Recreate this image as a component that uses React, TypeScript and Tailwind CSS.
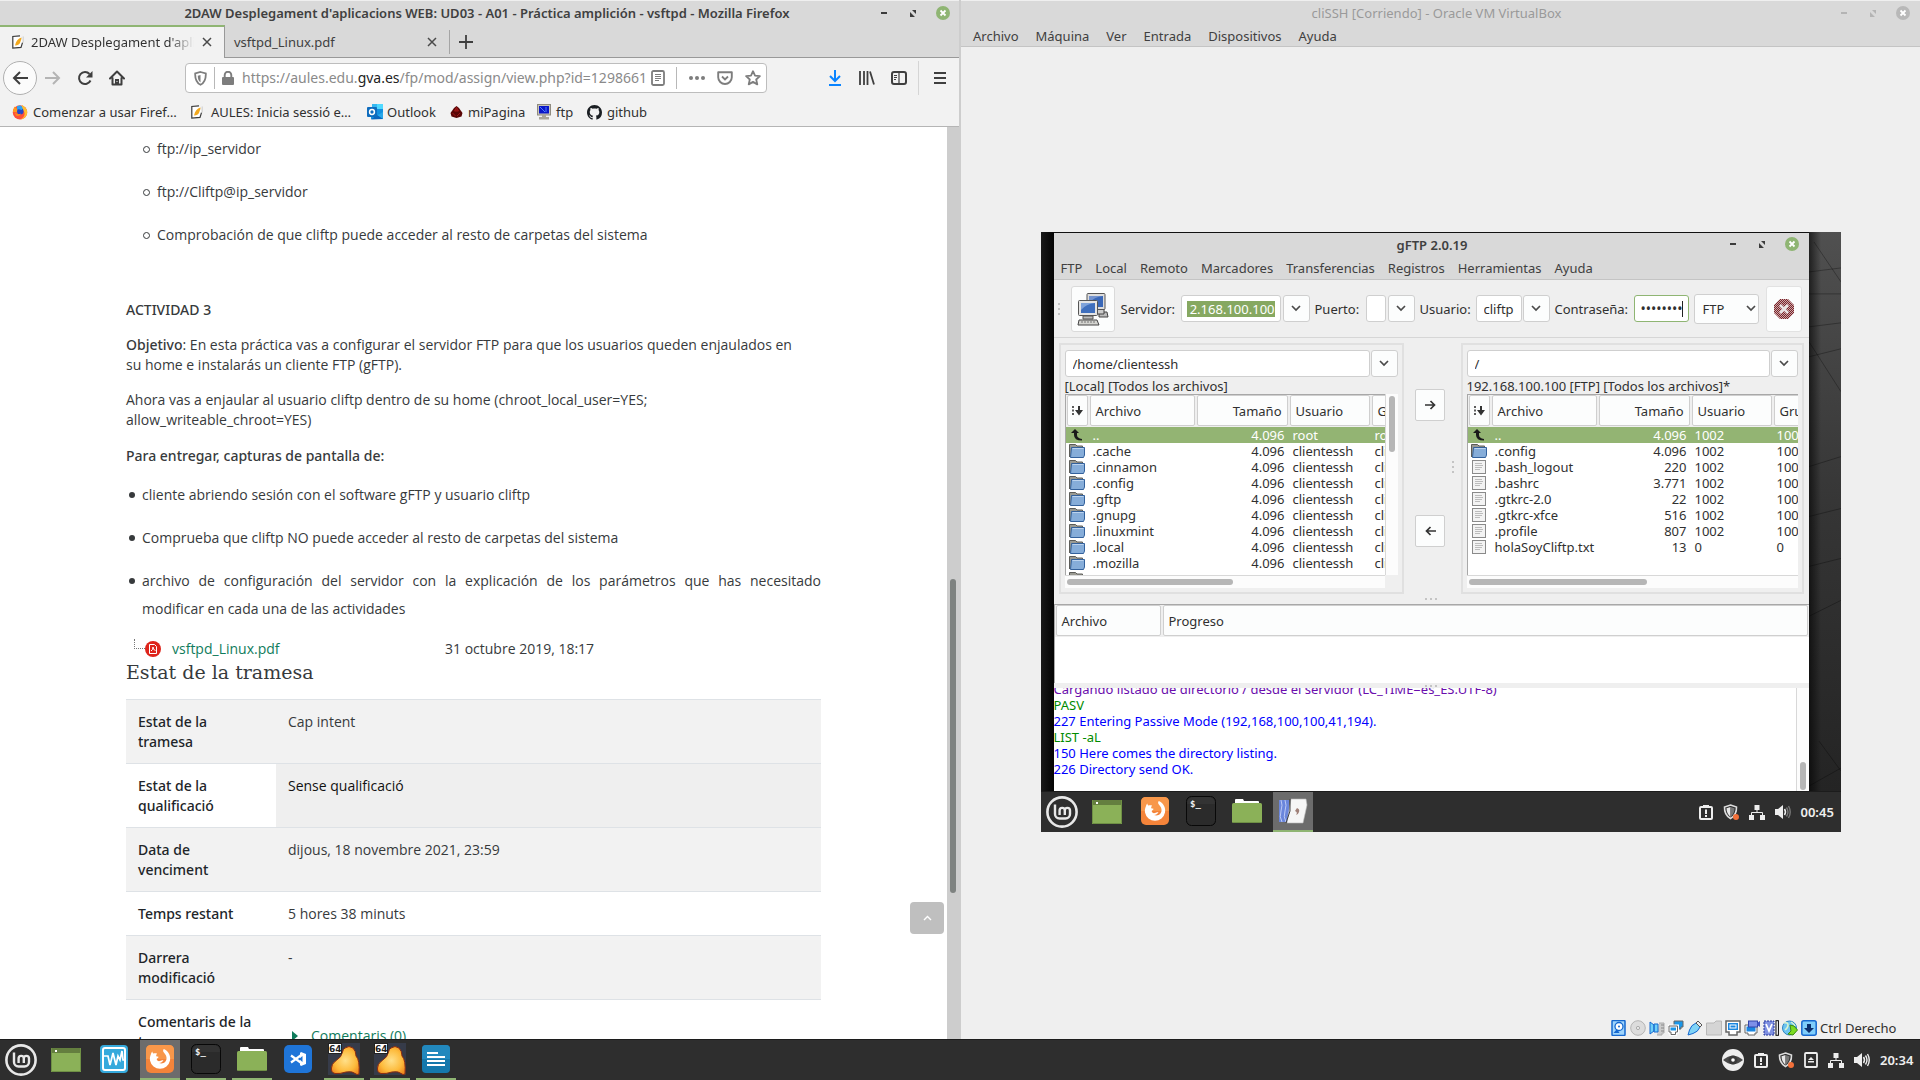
import React, { ReactNode } from "react";

/* ---------- window controls ---------- */

function WindowControls({ active = true }: { active?: boolean }) {
  const c = active ? "#3c3c3c" : "#b4b4b4";
  const close = active ? "#8fb573" : "#b8b8b8";
  return (
    <div className="flex items-center gap-[18px]">
      <button aria-label="Minimizar">
        <svg width="8" height="14" className="block"><rect x="1" y="6" width="6" height="2" fill={c} /></svg>
      </button>
      <button aria-label="Restaurar">
        <svg width="12" height="14" className="block">
          <path d="M6 4h4v4zM4 6v5h5z" fill={c} />
        </svg>
      </button>
      <button aria-label="Cerrar">
        <svg width="14" height="14" viewBox="0 0 14 14" className="block">
          <circle cx="7" cy="7" r="7" fill={close} />
          <path d="M4.500 4.500l5 5M9.500 4.500l-5 5" stroke="#fff" strokeWidth="1.800" />
        </svg>
      </button>
    </div>
  );
}

/* ---------- browser icons ---------- */

const CloseX = () => (
  <svg width="10" height="10" viewBox="0 0 10 10" className="block"><path d="M1 1l8 8M9 1l-8 8" stroke="#4a4a4a" strokeWidth="1.500" /></svg>
);

const AulesIcon = () => (
  <svg width="12" height="14" viewBox="0 0 12 14" className="block shrink-0">
    <path d="M8 .9L.8 1.500v11.700l8.200-.8 1.500-4.800" fill="#fff" stroke="#3a3a3a" strokeWidth="1.200" />
    <path d="M9.500 2.500C6 3.500 4 6 3 10.500c3-.1 5-1.500 5.500-4C9 5 9.500 4 9.500 2.500z" fill="#f2a81d" />
    <path d="M11.200 1.500v6" stroke="#ccc" />
  </svg>
);

const FirefoxColor = () => (
  <svg width="16" height="16" viewBox="0 0 16 16" className="block shrink-0">
    <circle cx="8" cy="8.400" r="7.200" fill="#ff4f3a" />
    <path d="M10 1c3 1.500 5.600 4.500 5.200 8-.4 3.500-3.400 6.500-7.200 6.500 3-1 5-3.500 4.500-6.500-.3-2-1.500-3-2.500-4z" fill="#ffbd2e" />
    <path d="M1 8C1 5 2 3.500 3 2.500l1 2 3-.5-1 2.500 2 2z" fill="#ff9a1f" />
    <circle cx="8.300" cy="7.300" r="3.200" fill="#2448c8" />
    <path d="M5 2.200c2-1.200 4-1 5 .5 1 1.400.5 3-.5 3.300-1.500-.8-2.500-1-4.500-.5z" fill="#2aa3f5" />
    <path d="M2.500 8.500c1.500 1 4 2.500 6.500 1-.5 2-3 3-5 2z" fill="#ff8a1e" />
  </svg>
);

const OutlookIcon = () => (
  <svg width="16" height="16" viewBox="0 0 16 16" className="block shrink-0">
    <path d="M5 0h11v5H5z" fill="#35b8f1" /><path d="M10 0h6v5h-6z" fill="#50d9ff" />
    <path d="M4 5h12v10H4z" fill="#1490df" /><path d="M16 8l-6 3.500 6 3.800z" fill="#28a8ea" />
    <path d="M4 15.500L16 15l-6-4z" fill="#0a66bd" />
    <rect y="3" width="10" height="10" rx="1" fill="#0f6cbd" />
    <circle cx="5" cy="8" r="2.400" fill="none" stroke="#fff" strokeWidth="1.500" />
  </svg>
);

const RubyIcon = () => (
  <svg width="13" height="12" viewBox="0 0 13 12" className="block shrink-0">
    <path d="M6.500 0l2.500 2 3.500 5-1 3.500L6.500 12l-5-1.500L.5 7 4 2z" fill="#5a0606" />
    <path d="M6.500 1.500L4.500 5h4zM2.500 7l3 3M10 7l-3 3" stroke="#a01818" fill="#8a0f0f" />
  </svg>
);

const FtpSiteIcon = () => (
  <svg width="14" height="16" viewBox="0 0 14 16" className="block shrink-0">
    <rect x=".5" y=".5" width="13" height="10.500" fill="#c8c4b8" stroke="#8f8b80" />
    <rect x="2" y="2" width="10" height="7.500" fill="#0a17c8" />
    <path d="M3 3l5 5M9 3v5" stroke="#4f7cff" />
    <path d="M5 11h4v2H5zM2 13h10v2.500H2z" fill="#a9a598" />
  </svg>
);

const GithubIcon = () => (
  <svg width="15" height="15" viewBox="0 0 16 16" className="block shrink-0">
    <path fill="#1b1f23" d="M8 0C3.580 0 0 3.580 0 8c0 3.540 2.290 6.530 5.470 7.590.4.070.55-.17.55-.38 0-.19-.01-.82-.01-1.490-2.010.37-2.530-.49-2.690-.94-.09-.23-.48-.94-.82-1.130-.28-.15-.68-.52-.01-.53.63-.01 1.080.58 1.230.82.72 1.210 1.870.87 2.330.66.07-.52.28-.87.51-1.070-1.780-.2-3.640-.89-3.640-3.950 0-.87.31-1.590.82-2.150-.08-.2-.36-1.020.08-2.120 0 0 .67-.21 2.200.82.64-.18 1.320-.27 2-.27s1.360.09 2 .27c1.530-1.040 2.200-.82 2.200-.82.44 1.100.16 1.920.08 2.120.51.56.82 1.270.82 2.150 0 3.070-1.870 3.750-3.650 3.950.29.25.54.73.54 1.480 0 1.070-.01 1.930-.01 2.200 0 .21.150.46.55.38A8.010 8.010 0 0016 8c0-4.420-3.580-8-8-8z" />
  </svg>
);

const BackIcon = () => (
  <svg width="16" height="14" viewBox="0 0 16 14"><path d="M8 1L2 7l6 6M2 7h14" fill="none" stroke="#3f3f3f" strokeWidth="2" /></svg>
);
const ForwardIcon = () => (
  <svg width="16" height="14" viewBox="0 0 16 14"><path d="M8 1l6 6-6 6M14 7H0" fill="none" stroke="#b4b4b4" strokeWidth="2" /></svg>
);
const ReloadIcon = () => (
  <svg width="16" height="16" viewBox="0 0 16 16">
    <path d="M13.500 10.500A6 6 0 1 1 12.500 4" fill="none" stroke="#3f3f3f" strokeWidth="2" />
    <path d="M15.500 1v6.500H9z" fill="#3f3f3f" />
  </svg>
);
const HomeIcon = () => (
  <svg width="16" height="16" viewBox="0 0 16 16">
    <path d="M1 8.500L8 1.500l7 7M3.500 8v6.500h9V8" fill="none" stroke="#3f3f3f" strokeWidth="2" strokeLinejoin="round" strokeLinecap="round" />
    <path d="M6 9h4v6H6z" fill="#3f3f3f" /><path d="M7.500 11h1v1h-1z" fill="#f2f2f2" />
  </svg>
);
const ShieldOutline = () => (
  <svg width="13" height="15" viewBox="0 0 13 15" className="block shrink-0"><path d="M6.500 1l5.300 1.500c.2 5-1 9-5.300 11.300C2.200 11.500 1 7.500 1.200 2.500z" fill="none" stroke="#7d7d7d" strokeWidth="1.800" /><path d="M6.500 4v7.500C4.300 9.800 3.800 7.500 3.800 4.800z" fill="#7d7d7d" /></svg>
);
const LockIcon = () => (
  <svg width="12" height="14" viewBox="0 0 12 14" className="block shrink-0"><rect y="6" width="12" height="8" rx="1" fill="#7d7d7d" /><path d="M2.700 7V4a3.300 3.300 0 0 1 6.600 0v3" fill="none" stroke="#7d7d7d" strokeWidth="1.900" /></svg>
);
const ReaderIcon = () => (
  <svg width="14" height="16" viewBox="0 0 14 16" className="block"><rect x="1" y="1" width="12" height="14" rx="1.500" fill="none" stroke="#7d7d7d" strokeWidth="1.800" /><path d="M4 4.500h6M4 6.500h6M4 8.500h6M4 10.500h4" stroke="#7d7d7d" /></svg>
);
const PocketIcon = () => (
  <svg width="16" height="15" viewBox="0 0 16 15" className="block"><path d="M1.200 1.200h13.600v5a6.800 6.800 0 0 1-13.600 0z" fill="none" stroke="#7d7d7d" strokeWidth="1.900" strokeLinejoin="round" /><path d="M5 5.500l3 3 3-3" fill="none" stroke="#7d7d7d" strokeWidth="1.800" /></svg>
);
const StarIcon = () => (
  <svg width="16" height="16" viewBox="0 0 16 16" className="block"><path d="M8 1.200l2 4.500 4.900.5-3.700 3.300 1.100 4.900L8 11.900l-4.300 2.500 1.100-4.900L1.100 6.200 6 5.700z" fill="none" stroke="#7d7d7d" strokeWidth="1.800" strokeLinejoin="round" /></svg>
);
const DownloadIcon = () => (
  <svg width="14" height="16" viewBox="0 0 14 16"><path d="M7 0v11M2 6l5 5 5-5" fill="none" stroke="#0a84ff" strokeWidth="2" /><path d="M1 14h12v2H1z" fill="#0a84ff" /></svg>
);
const LibraryIcon = () => (
  <svg width="16" height="14" viewBox="0 0 16 14"><path d="M1 0v14M5 0v14M8.500 0v14M11 .5l4 13" stroke="#3f3f3f" strokeWidth="1.800" /></svg>
);
const SidebarIcon = () => (
  <svg width="16" height="14" viewBox="0 0 16 14"><rect x="1" y="1" width="14" height="12" rx="2" fill="none" stroke="#3f3f3f" strokeWidth="2" /><path d="M8 1v12M3 4.500h3M3 6.500h3M3 8.500h2" stroke="#3f3f3f" strokeWidth="1.200" /></svg>
);
const MenuIcon = () => (
  <svg width="12" height="12" viewBox="0 0 12 12"><path d="M0 1h12M0 6h12M0 11h12" stroke="#3f3f3f" strokeWidth="2" /></svg>
);

/* ---------- panel (taskbar) icons ---------- */

const MintIcon = () => (
  <svg width="32" height="32" viewBox="0 0 32 32" className="block">
    <circle cx="16" cy="16" r="14.600" fill="none" stroke="#e8e8e8" strokeWidth="2.600" />
    <path d="M9 8.500v9.500a4.500 4.500 0 0 0 4.500 4.500h6a4.500 4.500 0 0 0 4.500-4.500v-3.500a2.600 2.600 0 0 0-5.200 0V19M18.800 14.500a2.600 2.600 0 0 0-5.200 0V19" fill="none" stroke="#e8e8e8" strokeWidth="2.400" />
  </svg>
);
const DesktopIcon = () => (
  <svg width="30" height="24" viewBox="0 0 30 24" className="block">
    <rect width="30" height="24" fill="#8bb158" /><rect width="30" height="5" fill="#647f3f" /><rect x="4" y="2" width="2" height="2" fill="#fff" />
    <path d="M.5 0v23.500h29V0" fill="none" stroke="#6f9045" />
  </svg>
);
const MonitorIcon = () => (
  <svg width="28" height="28" viewBox="0 0 28 28" className="block">
    <rect width="28" height="28" rx="4" fill="#35a9dc" />
    <rect x="3" y="3" width="22" height="22" rx="2" fill="none" stroke="#fff" strokeWidth="2" />
    <path d="M4 11h4l2 9 3-12 3 12 2-9 2 4 2-9 1 9h2" fill="none" stroke="#fff" strokeWidth="1.700" />
  </svg>
);
const FirefoxMint = () => (
  <svg width="28" height="28" viewBox="0 0 28 28" className="block">
    <rect width="28" height="28" rx="5" fill="#f4843a" /><path d="M0 14V5q0-5 5-5h18q5 0 5 5v9z" fill="#f8974a" />
    <path d="M5 9c.2-1 .8-2 1.500-2.500 0 1 .2 1.500.7 2C8.500 8 10 8 11 8.500c-.5 1-1 2-.8 2.800l2.300.5c.2 1-1.500 1.500-1.800 2.300 0 1.500 1.500 2.400 3.300 2 1.300-.3 2-1.100 3.500-.8-.8 1.500-2.500 2.600-4.500 2.700 4.500 1.500 8-1.500 7.500-5.500-.2-2.500-1.800-4-3-5.500-.6-1-.5-2 .3-3C22 6 25 10 24 15.500a10.200 10.200 0 0 1-20 0C3.600 13 4.200 11 5 9z" fill="#fff" />
  </svg>
);
const TerminalIcon = () => (
  <svg width="30" height="30" viewBox="0 0 30 30" className="block">
    <rect x=".5" y=".5" width="29" height="29" rx="5" fill="#2b2b2b" stroke="#080808" />
    <path d="M1 8q0-7 7-7h14q7 0 7 7" fill="#3c3c3c" opacity=".5" />
    <text x="4" y="11" fontSize="9" fontFamily="DejaVu Sans Mono, monospace" fontWeight="700" fill="#f0f0f0">$_</text>
  </svg>
);
const FolderGreen = () => (
  <svg width="30" height="26" viewBox="0 0 30 26" className="block">
    <path d="M3 7V2q0-1 1-1h7l1 2h14q1 0 1 1v3z" fill="#fff" />
    <rect y="5" width="30" height="20" rx="1.500" fill="#8bb158" /><path d="M1 24.500h28" stroke="#6f9045" />
  </svg>
);
const CodeIcon = () => (
  <svg width="28" height="28" viewBox="0 0 28 28" className="block">
    <rect width="28" height="28" rx="5" fill="#1f75d8" />
    <path d="M7 10.500L18 18.500M7 17.500L18 9.500" stroke="#fff" strokeWidth="2.200" /><path d="M17 7l5 2v10l-5 2-1-1V8z" fill="#fff" /><path d="M18.500 11v6L15 14z" fill="#1f75d8" />
  </svg>
);
const Vm64Icon = () => (
  <svg width="32" height="32" viewBox="0 0 32 32" className="block">
    <defs><radialGradient id="vmg" cx=".5" cy=".5" r=".6"><stop offset="0" stopColor="#ffe08a" /><stop offset=".65" stopColor="#fdbb3c" /><stop offset="1" stopColor="#f08c20" /></radialGradient></defs>
    <rect width="32" height="32" fill="#363b49" />
    <path d="M17 5q4-3 8 0 3 3 3 8 4 4 3 18l-2 .5q-5-4-11-2.500-6 2-11 1.500-4-1-3.500-5.500 0-4 4-7Q14 14 14.500 9q.5-3 2.500-4z" fill="url(#vmg)" stroke="#8c2c10" />
    <rect width="14" height="11" fill="#222" /><rect x="1" y="1" width="12" height="9" fill="#fff" />
    <text x="1" y="9" fontSize="9" fontFamily="DejaVu Sans, sans-serif" fontWeight="700" fill="#222">64</text>
  </svg>
);
const WriterIcon = () => (
  <svg width="28" height="28" viewBox="0 0 28 28" className="block">
    <rect width="28" height="28" rx="4" fill="#1578ac" /><path d="M0 14V4q0-4 4-4h20q4 0 4 4v10z" fill="#2288bd" />
    <path d="M5 8h11M5 12h18M5 16h18M5 20h18" stroke="#fff" strokeWidth="2" />
  </svg>
);
const GftpTaskIcon = () => (
  <svg width="30" height="28" viewBox="0 0 30 28" className="block">
    <rect x="1" y="3" width="10" height="22" fill="#6a86dc" /><path d="M3 3q2 5 0 11t1 11M7 3q2 5 0 11t1 11" stroke="#bccaf5" fill="none" />
    <path d="M13 2h15l1 6-4 18H9z" fill="#f6f6f6" stroke="#bbb" strokeWidth=".6" /><path d="M12 2v12L8 26" stroke="#444" fill="none" />
    <path d="M19 11q3 1 2 4t-3 3q2-3-1-4z" fill="#a08078" />
  </svg>
);

/* ---------- tray icons ---------- */

const EyeTray = () => (
  <svg width="22" height="22" viewBox="0 0 22 22" className="block"><circle cx="11" cy="11" r="11" fill="#eee" /><path d="M1 11Q11 2.500 21 11 11 19.500 1 11z" fill="#4a4a4a" /><circle cx="11" cy="11" r="4.500" fill="#3a3a3a" /><circle cx="11" cy="11" r="1.800" fill="#fff" /></svg>
);
const ClipTray = () => (
  <svg width="14" height="16" viewBox="0 0 14 16" className="block"><rect x="1" y="3" width="12" height="12" rx="1" fill="none" stroke="#eee" strokeWidth="2" /><rect x="4" y="1" width="6" height="3" fill="#eee" /><path d="M7 5.500v4.500M7 11v2" stroke="#eee" strokeWidth="2" /></svg>
);
const ShieldTray = () => (
  <svg width="16" height="16" viewBox="0 0 16 16" className="block"><path d="M7.500 1l6 2c.2 5-1.500 9-6 11.500C3 12 1.300 8 1.500 3z" fill="none" stroke="#ddd" strokeWidth="1.600" /><path d="M7.500 3v10C5 11 3.500 8 3.500 4.300z" fill="#e8e8e8" /><path d="M7.500 3v10c2.500-2 4-5 4-8.700z" fill="#777" /><circle cx="13" cy="13" r="3" fill="#f2703a" /></svg>
);
const EjectTray = () => (
  <svg width="14" height="16" viewBox="0 0 14 16" className="block"><rect x="1" y="1" width="12" height="14" rx="1" fill="none" stroke="#eee" strokeWidth="1.800" /><path d="M7 5l3 3H4zM4 9h6v1.500H4z" fill="#eee" /></svg>
);
const NetTray = () => (
  <svg width="16" height="16" viewBox="0 0 16 16" className="block"><path d="M5.500 1h5v5h-5zM0 11h5v5H0zM11 11h5v5h-5z" fill="#eee" /><path d="M8 5v3.500M2.500 11V8.500h11V11" fill="none" stroke="#eee" /></svg>
);
const VolumeTray = ({ faded = false }: { faded?: boolean }) => (
  <svg width="16" height="14" viewBox="0 0 16 14" className="block"><path d="M0 4h3l5-4v14l-5-4H0z" fill="#eee" /><path d="M9.500 4q2 3 0 6" fill="none" stroke="#eee" strokeWidth="1.500" /><path d="M11.500 2.500q3 4.500 0 9M13.500 1q3.500 6 0 12" fill="none" stroke={faded ? "#777" : "#eee"} strokeWidth="1.400" /></svg>
);

/* ---------- panel ---------- */

type Task = { label: string; icon: ReactNode; active?: boolean; running?: boolean };

function Panel({ tasks, tray, clock }: { tasks: Task[]; tray: ReactNode; clock: string }) {
  return (
    <div className="flex h-[41px] shrink-0 items-stretch border-t border-[#1c1c1c] bg-[#2e2e2e]">
      <button aria-label="Menú" className="flex w-[42px] items-center justify-center"><MintIcon /></button>
      <button aria-label="Mostrar escritorio" className="flex w-[48px] items-center justify-center"><DesktopIcon /></button>
      <div className="flex gap-[6px] pl-1">
        {tasks.map((t, i) => (
          <button key={i} aria-label={t.label}
            className={`flex w-10 items-center justify-center border-b-2 ${t.running ? "border-[#8fb573]" : "border-transparent"} ${t.active ? "bg-[#6c6c6c]" : ""}`}>
            {t.icon}
          </button>
        ))}
      </div>
      <div className="ml-auto flex items-center gap-[10px] pr-1">
        {tray}
        <span className="w-[36px] whitespace-nowrap text-[13px] font-semibold leading-4 text-[#eee]">{clock}</span>
      </div>
    </div>
  );
}

/* ---------- Firefox window ---------- */

const bookmarks = [
  { label: "Comenzar a usar Firef…", icon: <FirefoxColor />, w: "w-[179px] gap-[5px]" },
  { label: "AULES: Inicia sessió e…", icon: <AulesIcon />, w: "w-[176px] gap-[8px]" },
  { label: "Outlook", icon: <OutlookIcon />, w: "w-[83px] gap-[4px]" },
  { label: "miPagina", icon: <RubyIcon />, w: "w-[87px] gap-[5px]" },
  { label: "ftp", icon: <FtpSiteIcon />, w: "w-[50px] gap-[5px]" },
  { label: "github", icon: <GithubIcon />, w: "w-[70px] gap-[5px]" },
];

function Bullet({ hollow, children }: { hollow?: boolean; children: ReactNode }) {
  return (
    <li className={`flex leading-7 ${hollow ? "ml-[17px]" : "ml-[3px]"}`}>
      <span className={`mr-[7px] mt-[11px] shrink-0 rounded-full ${hollow ? "size-[7px] border border-[#373a3c]" : "size-[6px] bg-[#373a3c]"}`} />
      <span className="flex-1">{children}</span>
    </li>
  );
}

const status: { h: ReactNode; v: ReactNode; row: string; cell?: string }[] = [
  { h: "Estat de la tramesa", v: "Cap intent", row: "bg-[#f2f2f2]" },
  { h: "Estat de la qualificació", v: "Sense qualificació", row: "", cell: "bg-[#efefef] text-[#111]" },
  { h: "Data de venciment", v: "dijous, 18 novembre 2021, 23:59", row: "bg-[#f2f2f2]" },
  { h: "Temps restant", v: "5 hores 38 minuts", row: "" },
  { h: "Darrera modificació", v: "-", row: "bg-[#f2f2f2]" },
  {
    h: "Comentaris de la tramesa",
    v: (
      <a href="#comentaris" className="mt-[14px] flex items-center text-[#0f7c5c]">
        <svg width="7" height="10" className="mr-[12px] ml-[4px] block"><path d="M0 0l6 5-6 5z" fill="#0f7c5c" /></svg>
        Comentaris (0)
      </a>
    ),
    row: "",
  },
];

const medium = "font-['Noto_Sans',sans-serif] font-medium";

function Firefox() {
  return (
    <section className="flex min-w-0 flex-1 flex-col border-t border-t-[#efefef] bg-[#f2f2f2]">
      <header className="flex h-6 shrink-0 items-center bg-[#d9d9d9] pr-[9px]">
        <span className="flex-1 truncate pl-[94px] text-center font-semibold text-[#404040]">
          2DAW Desplegament d'aplicacions WEB: UD03 - A01 - Práctica amplición - vsftpd - Mozilla Firefox
        </span>
        <WindowControls />
      </header>

      <div className="flex h-[33px] shrink-0 bg-[#d9d9d9]">
        <div className="flex w-[225px] shrink-0 items-center border-t-2 border-r border-t-[#8fb573] border-r-[#999] bg-[#f2f2f2] pr-3 pb-px pl-3">
          <AulesIcon />
          <span className="ml-[7px] flex-1 overflow-hidden whitespace-nowrap bg-linear-to-r from-[#303030] from-85% to-transparent bg-clip-text text-transparent">2DAW Desplegament d'aplicacions</span>
          <button aria-label="Cerrar pestaña" className="ml-2"><CloseX /></button>
        </div>
        <div className="flex flex-1 items-center border-t border-b border-t-[#d9d9d9] border-b-[#999]">
          <div className="flex h-6 w-[225px] items-center border-r border-[#a5a5a5] pr-[12px] pl-[9px] text-[#404040]">
            <span className="flex-1">vsftpd_Linux.pdf</span>
            <button aria-label="Cerrar pestaña"><CloseX /></button>
          </div>
          <button aria-label="Nueva pestaña" className="ml-[9px]">
            <svg width="14" height="14" className="block"><path d="M7 0v14M0 7h14" stroke="#3f3f3f" strokeWidth="1.800" /></svg>
          </button>
        </div>
      </div>

      <div className="flex h-[40px] shrink-0 items-center pr-[13px] pl-[3px]">
        <button aria-label="Atrás" className="mr-2 flex size-[34px] items-center justify-center rounded-full border border-[#b0b0b0] bg-[#fbfbfb]"><BackIcon /></button>
        <button aria-label="Adelante" className="flex w-4 justify-center"><ForwardIcon /></button>
        <button aria-label="Recargar" className="ml-4 flex w-4 justify-center"><ReloadIcon /></button>
        <button aria-label="Inicio" className="ml-4 flex w-4 justify-center"><HomeIcon /></button>
        <div className="ml-[60px] flex h-[30px] min-w-0 flex-1 items-center rounded-[4px] border border-[#bdbdbd] bg-white pr-[5px] pl-2">
          <ShieldOutline />
          <span className="mx-[7px] h-[22px] w-px bg-[#b8b8b8]" />
          <LockIcon />
          <div role="textbox" aria-label="Dirección" className="ml-2 flex-1 overflow-hidden whitespace-nowrap text-[14px] text-[#8a8a8a]">
            https://aules.edu.<span className="text-[#222]">gva.es</span>/fp/mod/assign/view.php?id=1298661
          </div>
          <button aria-label="Vista de lectura"><ReaderIcon /></button>
          <span className="mr-3 ml-[11px] h-[22px] w-px bg-[#b8b8b8]" />
          <button aria-label="Acciones de página"><svg width="16" height="4" className="block"><circle cx="2" cy="2" r="2" fill="#7d7d7d" /><circle cx="8" cy="2" r="2" fill="#7d7d7d" /><circle cx="14" cy="2" r="2" fill="#7d7d7d" /></svg></button>
          <button aria-label="Guardar en Pocket" className="mx-3"><PocketIcon /></button>
          <button aria-label="Añadir a marcadores"><StarIcon /></button>
        </div>
        <div className="ml-[60px] flex items-center gap-4">
          <button aria-label="Descargas" className="flex w-4 justify-center"><DownloadIcon /></button>
          <button aria-label="Biblioteca"><LibraryIcon /></button>
          <button aria-label="Barra lateral"><SidebarIcon /></button>
        </div>
        <span className="mr-[15px] ml-[11px] h-[34px] w-px bg-[#d5d5d5]" />
        <button aria-label="Abrir menú"><MenuIcon /></button>
      </div>

      <nav className="flex h-[29px] shrink-0 items-center border-b border-[#b5b5b5] pl-[12px] text-[#303030]">
        {bookmarks.map((b) => (
          <a key={b.label} href="#marcador" className={`flex shrink-0 items-center whitespace-nowrap ${b.w}`}>
            {b.icon}{b.label}
          </a>
        ))}
      </nav>

      <div className="flex min-h-0 flex-1 bg-white">
        <div className="relative min-w-0 flex-1 overflow-hidden pt-2 pr-[126px] pl-[126px] font-['Open_Sans',sans-serif] text-[14px] leading-5 text-[#373a3c]">
          <ul className="flex flex-col gap-[15px]">
            <Bullet hollow>ftp://ip_servidor</Bullet>
            <Bullet hollow>ftp://Cliftp@ip_servidor</Bullet>
            <Bullet hollow>Comprobación de que cliftp puede acceder al resto de carpetas del sistema</Bullet>
          </ul>
          <p className={`mt-[51px] ${medium}`}>ACTIVIDAD 3</p>
          <p className="mt-[15px]">
            <b className={medium}>Objetivo</b>: En esta práctica vas a configurar el servidor FTP para que los usuarios queden enjaulados en
            <br />su home e instalarás un cliente FTP (gFTP).
          </p>
          <p className="mt-[15px]">Ahora vas a enjaular al usuario cliftp dentro de su home (chroot_local_user=YES;<br />allow_writeable_chroot=YES)</p>
          <p className={`mt-4 ${medium}`}>Para entregar, capturas de pantalla de:</p>
          <ul className="mt-[15px] flex flex-col gap-[15px]">
            <Bullet>cliente abriendo sesión con el software gFTP y usuario cliftp</Bullet>
            <Bullet>Comprueba que cliftp NO puede acceder al resto de carpetas del sistema</Bullet>
            <Bullet>
              <span className="block text-justify [text-align-last:justify]">archivo de configuración del servidor con la explicación de los parámetros que has necesitado</span>
              modificar en cada una de las actividades
            </Bullet>
          </ul>
          <div className="mt-4 flex h-5 items-center pl-[8px]">
            <span className="h-[10px] w-[11px] self-start border-b border-l border-dotted border-[#777]" />
            <svg width="16" height="16" viewBox="0 0 16 16" className="mr-[11px] block"><circle cx="8" cy="8" r="8" fill="#de241b" /><path d="M4.500 3.500h5l2 2v7h-7zM6 10q2-1 2-4 0 3 2.500 3.500" fill="none" stroke="#fff" strokeWidth="1" /></svg>
            <a href="#vsftpd" className="w-[273px] text-[#0f7c5c]">vsftpd_Linux.pdf</a>
            <span>31 octubre 2019, 18:17</span>
          </div>
          <h3 className="font-['DejaVu_Serif',serif] text-[19px] leading-[27px]">Estat de la tramesa</h3>
          <table className="mt-[13px] w-full table-fixed border-collapse">
            <colgroup><col className="w-[150px]" /><col /></colgroup>
            <tbody>
              {status.map((s, i) => (
                <tr key={i} className={`border-t border-[#dee2e6] align-top ${s.row}`}>
                  <th scope="row" className={`py-3 pr-[22px] pb-[11px] pl-[12px] text-left text-[#212529] ${medium}`}>{s.h}</th>
                  <td className={`px-[12px] pt-3 pb-[11px] ${s.cell ?? ""}`}>{s.v}</td>
                </tr>
              ))}
            </tbody>
          </table>
          <button aria-label="Subir" className="absolute right-[3px] bottom-[105px] flex h-8 w-[34px] items-center justify-center rounded-[4px] bg-[#bfbfbf]">
            <svg width="9" height="6" className="block"><path d="M1 5l3.500-3.500L8 5" fill="none" stroke="#fff" strokeWidth="1.400" /></svg>
          </button>
        </div>
        <div className="flex w-[12px] shrink-0 flex-col items-center bg-[#cdcdcd]">
          <span className="basis-[452px]" />
          <span className="h-[314px] w-[6px] rounded-full bg-[#7e8280]" />
        </div>
      </div>
    </section>
  );
}

/* ---------- gFTP ---------- */

const ConnectIcon = () => (
  <svg width="32" height="34" viewBox="0 0 32 34" className="block">
    <path d="M22 20h8l1 5h-9z" fill="#bbb" stroke="#444" /><path d="M19 17h8v5h-8z" fill="#ccc" stroke="#444" />
    <rect x="10" y="1.500" width="18" height="16" rx="1" fill="#ddd" stroke="#555" /><rect x="12" y="4" width="14" height="11" fill="#3a68b8" /><path d="M12 11V4h14q-9 1-14 7z" fill="#7393cf" />
    <rect x="1.500" y="8.500" width="19" height="15" rx="1" fill="#e4e4e4" stroke="#555" /><rect x="4" y="11" width="14" height="10" fill="#3f6fbd" /><path d="M4 18V11h14q-9 1-14 7z" fill="#7ea2da" />
    <path d="M6 24h10v3H6z" fill="#bbb" stroke="#555" /><path d="M2 28h18l2 5H1z" fill="#d4d4d0" stroke="#444" /><path d="M4 30h14" stroke="#777" strokeDasharray="2 1" />
  </svg>
);

const StopIcon = () => (
  <svg width="22" height="22" viewBox="0 0 22 22" className="block">
    <defs><pattern id="chk" width="2" height="2" patternUnits="userSpaceOnUse"><rect width="2" height="2" fill="#c9a9a9" /><path d="M0 0h1v1H0zM1 1h1v1H1z" fill="#7c2229" /></pattern></defs>
    <path d="M7 1h8l6 6v8l-6 6H7l-6-6V7z" fill="url(#chk)" /><path d="M7 7l8 8M15 7l-8 8" stroke="#e9e4e4" strokeWidth="2.500" />
  </svg>
);

const Chevron = () => (
  <svg width="10" height="7" viewBox="0 0 10 7" className="block"><path d="M1 1l4 4 4-4" fill="none" stroke="#4a4a4a" strokeWidth="1.700" /></svg>
);

const FolderBlue = () => (
  <svg width="16" height="14" viewBox="0 0 16 14" className="block">
    <path d="M.5 13V.5h6l1.500 1.500h5.500V4" fill="#9a9a92" stroke="#5c5c58" /><path d="M2.500 3.500h13V11l-1 2.500h-13z" fill="#86add9" stroke="#33619c" /><path d="M3.500 4.500h11" stroke="#bcd3ee" />
  </svg>
);
const FileIcon = () => (
  <svg width="14" height="14" viewBox="0 0 14 14" className="block">
    <rect x=".5" y=".5" width="13" height="13" fill="#f3f3f3" stroke="#8a8a8a" /><path d="M3 3.500h7M3 5.500h8M3 7.500h7M3 9.500h5" stroke="#bcbcbc" />
  </svg>
);
const UpIcon = () => (
  <svg width="12" height="12" viewBox="0 0 12 12" className="block"><path d="M4 0l4 4H6v2q0 3 5 4v1.500Q3 11.500 3 6V4H0z" fill="#1a1a1a" /></svg>
);
const SortIcon = () => (
  <svg width="11" height="10" viewBox="0 0 11 10" className="block"><path d="M1 0v10" stroke="#333" strokeWidth="1.600" strokeDasharray="2 1.500" /><path d="M6 0h2v4h3L7 9.500 3 4h3z" fill="#333" /></svg>
);

type Row = { icon: ReactNode; name: string; size: string; user: string; group: string };

const local: Row[] = [
  { icon: <UpIcon />, name: "..", size: "4.096", user: "root", group: "root" },
  ...[".cache", ".cinnamon", ".config", ".gftp", ".gnupg", ".linuxmint", ".local", ".mozilla"].map((name) => ({
    icon: <FolderBlue />, name, size: "4.096", user: "clientessh", group: "clientessh",
  })),
  { icon: <FolderBlue />, name: "", size: "", user: "", group: "" },
];
const remote: Row[] = [
  { icon: <UpIcon />, name: "..", size: "4.096", user: "1002", group: "1002" },
  { icon: <FolderBlue />, name: ".config", size: "4.096", user: "1002", group: "1002" },
  { icon: <FileIcon />, name: ".bash_logout", size: "220", user: "1002", group: "1002" },
  { icon: <FileIcon />, name: ".bashrc", size: "3.771", user: "1002", group: "1002" },
  { icon: <FileIcon />, name: ".gtkrc-2.0", size: "22", user: "1002", group: "1002" },
  { icon: <FileIcon />, name: ".gtkrc-xfce", size: "516", user: "1002", group: "1002" },
  { icon: <FileIcon />, name: ".profile", size: "807", user: "1002", group: "1002" },
  { icon: <FileIcon />, name: "holaSoyCliftp.txt", size: "13", user: "0", group: "0" },
];

function HeadCell({ children, right }: { children: ReactNode; right?: boolean }) {
  return (
    <th className="h-8 bg-[#efefef] p-0 px-px align-top font-normal">
      <div className={`flex h-[31px] items-center overflow-hidden rounded-[2px] border border-[#cfcfcf] bg-[#fcfdfd] px-[5px] ${right ? "justify-end" : ""}`}>{children}</div>
    </th>
  );
}

function FilePane({ path, label, id, rows, scroll, className }: { path: string; label: string; id: string; rows: Row[]; scroll?: boolean; className: string }) {
  return (
    <div className={`flex min-w-0 flex-col border-2 border-[#e0e0e0] px-1 pt-[5px] pb-1 ${className}`}>
      <div className="flex gap-px">
        <input id={id} aria-label={label} defaultValue={path} className="h-[27px] min-w-0 flex-1 rounded-[3px] border border-[#cfcfcf] bg-white px-[7px]" />
        <DropButton label={"Historial " + id} />
      </div>
      <div className="h-[17px] whitespace-nowrap leading-[18px]">{label}</div>
      <div className="flex">
        <div className="h-[181px] min-w-0 flex-1 overflow-hidden border-t border-l border-[#a8a8a8] bg-white">
          <table className="w-[420px] table-fixed border-collapse">
            <colgroup>
              <col className="w-[23px]" /><col className="w-[107px]" /><col className="w-[93px]" /><col className="w-[82px]" /><col />
            </colgroup>
            <thead>
              <tr>
                <HeadCell><span className="-mx-px"><SortIcon /></span></HeadCell>
                <HeadCell>Archivo</HeadCell>
                <HeadCell right>Tamaño</HeadCell>
                <HeadCell>Usuario</HeadCell>
                <HeadCell>Grupo</HeadCell>
              </tr>
            </thead>
            <tbody>
              {rows.map((r, i) => (
                <tr key={i} className={`h-4 leading-4 ${i === 0 ? "bg-[#93b473] text-white" : ""}`}>
                  <td className="p-0"><span className="flex h-4 items-center justify-center">{r.icon}</span></td>
                  <td className="overflow-hidden whitespace-nowrap py-0 pr-0 pl-1">{r.name}</td>
                  <td className="py-0 pr-1 pl-0 text-right">{r.size}</td>
                  <td className="py-0 pr-0 pl-1">{r.user}</td>
                  <td className="py-0 pr-0 pl-1">{r.group}</td>
                </tr>
              ))}
            </tbody>
          </table>
        </div>
        {scroll && (
          <div className="flex w-[13px] justify-center border-l border-[#d8d8d8] bg-[#fcfcfc] pt-[2px]">
            <span className="h-[56px] w-[6px] rounded-full bg-[#b6b6b6]" />
          </div>
        )}
      </div>
      <div className={`flex h-[13px] items-center border-t border-[#d8d8d8] bg-[#fcfcfc] pl-[2px] ${scroll ? "mr-[13px]" : ""}`}>
        <span className={`h-[6px] rounded-full bg-[#b6b6b6] ${scroll ? "w-[166px]" : "w-[178px]"}`} />
      </div>
    </div>
  );
}

function DropButton({ label }: { label: string }) {
  return (
    <button aria-label={label} className="flex h-[27px] w-[27px] shrink-0 items-center justify-center rounded-[3px] border border-[#cfcfcf] bg-[#fcfdfd]"><Chevron /></button>
  );
}

const Grip = ({ vertical }: { vertical?: boolean }) => (
  <span className={`flex gap-[3px] ${vertical ? "flex-col" : ""}`}>
    <i className="size-[2px] bg-[#c4c4c4]" /><i className="size-[2px] bg-[#c4c4c4]" /><i className="size-[2px] bg-[#c4c4c4]" />
  </span>
);

const log = [
  { t: "Cargando listado de directorio / desde el servidor (LC_TIME=es_ES.UTF-8)", c: "text-[#6a0dad]" },
  { t: "PASV", c: "text-[#008b00]" },
  { t: "227 Entering Passive Mode (192,168,100,100,41,194).", c: "text-[#0000ff]" },
  { t: "LIST -aL", c: "text-[#008b00]" },
  { t: "150 Here comes the directory listing.", c: "text-[#0000ff]" },
  { t: "226 Directory send OK.", c: "text-[#0000ff]" },
];

function Gftp() {
  return (
    <div className="mt-px flex min-w-0 flex-1 flex-col bg-[#efefef]">
      <header className="flex h-[22px] items-center bg-[#d9d9d9] pr-[10px]">
        <span className="flex-1 pt-[2px] pl-[82px] text-center font-semibold text-[#404040]">gFTP 2.0.19</span>
        <WindowControls />
      </header>
      <nav className="flex h-[25px] items-center gap-[13px] border-b border-[#c4c4c4] bg-[#d9d9d9] pt-[2px] pl-[7px] text-[#404040]">
        {["FTP", "Local", "Remoto", "Marcadores", "Transferencias", "Registros", "Herramientas", "Ayuda"].map((m) => <button key={m}>{m}</button>)}
      </nav>

      <div className="flex h-[58px] items-center border-b border-[#d6d6d6] pr-[7px] pl-1">
        <Grip vertical />
        <button aria-label="Conectar" className="ml-[11px] flex h-[46px] w-[44px] items-center justify-center rounded-[3px] border border-[#dadada] bg-[#fcfdfd]"><ConnectIcon /></button>
        <label htmlFor="srv" className="w-[66px] pl-[6px]">Servidor:</label>
        <div className="mr-[2px] flex h-[27px] w-[100px] items-center rounded-[3px] border border-[#cfcfcf] bg-white px-[5px]">
          <input id="srv" defaultValue="2.168.100.100" className="h-4 w-full bg-[#86a861] text-right text-white" />
        </div>
        <DropButton label="Historial de servidores" />
        <label htmlFor="port" className="w-[56px] pl-[5px]">Puerto:</label>
        <input id="port" className="mr-[2px] h-[27px] w-5 rounded-[3px] border border-[#cfcfcf] bg-white" />
        <DropButton label="Historial de puertos" />
        <label htmlFor="usr" className="w-[61px] pl-[5px]">Usuario:</label>
        <input id="usr" defaultValue="cliftp" className="mr-px h-[27px] w-[46px] rounded-[3px] border border-[#cfcfcf] bg-white px-[7px]" />
        <DropButton label="Historial de usuarios" />
        <label htmlFor="pwd" className="w-[84px] pl-[5px]">Contraseña:</label>
        <div className="flex h-[27px] w-[55px] items-center rounded-[3px] border border-[#8fb573] bg-white pl-[6px]">
          <input id="pwd" type="password" defaultValue="usuario1" className="w-[41px] min-w-0 text-[14px]" />
          <span className="h-4 w-px bg-[#222]" />
        </div>
        <div className="relative ml-[5px] w-[65px] shrink-0">
          <select aria-label="Protocolo" className="h-[30px] w-full appearance-none rounded-[3px] border border-[#cfcfcf] bg-[#fcfdfd] pl-2"><option>FTP</option></select>
          <span className="pointer-events-none absolute top-[11px] right-[3px]"><Chevron /></span>
        </div>
        <button aria-label="Detener" className="ml-[7px] flex h-[46px] w-9 shrink-0 items-center justify-center rounded-[3px] border border-[#e2e2e2] bg-[#fcfdfd]"><StopIcon /></button>
      </div>

      <div className="flex px-[5px] pt-[5px]">
        <FilePane id="local" path="/home/clientessh" label="[Local] [Todos los archivos]" rows={local} scroll className="w-[345px] shrink-0" />
        <div className="flex w-[57px] shrink-0 flex-col items-center pt-[46px]">
          <button aria-label="Subir archivos" className="mr-[4px] flex h-8 w-[30px] items-center justify-center rounded-[2px] border border-[#cfcfcf] bg-[#fcfdfd]">
            <svg width="11" height="10" viewBox="0 0 11 10"><path d="M0 5h9M5.500 1l4 4-4 4" fill="none" stroke="#333" strokeWidth="1.700" /></svg>
          </button>
          <div className="mt-[40px] mr-[7px] flex h-[14px] self-end"><Grip vertical /></div>
          <button aria-label="Descargar archivos" className="mt-[40px] mr-[4px] flex h-8 w-[30px] items-center justify-center rounded-[2px] border border-[#cfcfcf] bg-[#fcfdfd]">
            <svg width="11" height="10" viewBox="0 0 11 10"><path d="M11 5H2M5.500 1l-4 4 4 4" fill="none" stroke="#333" strokeWidth="1.700" /></svg>
          </button>
        </div>
        <FilePane id="remoto" path="/" label="192.168.100.100 [FTP] [Todos los archivos]*" rows={remote} className="flex-1" />
      </div>
      <div className="flex h-[10px] items-center justify-center"><Grip /></div>

      <div className="h-[79px] border-t border-l border-[#a8a8a8] bg-white">
        <table className="w-full table-fixed border-collapse">
          <colgroup><col className="w-[107px]" /><col /></colgroup>
          <thead><tr><HeadCell>Archivo</HeadCell><HeadCell>Progreso</HeadCell></tr></thead>
        </table>
      </div>
      <div className="flex h-[5px] items-center justify-center"><Grip /></div>

      <div className="flex h-[103px] bg-white">
        <div className="flex flex-1 flex-col justify-end overflow-hidden pb-[14px]">
          {log.map((l) => <p key={l.t} className={`shrink-0 leading-4 ${l.c}`}>{l.t}</p>)}
        </div>
        <div className="flex w-[13px] items-end justify-center border-l border-[#d8d8d8] bg-[#fcfcfc] pb-px">
          <span className="h-7 w-[6px] rounded-full bg-[#b6b6b6]" />
        </div>
      </div>
    </div>
  );
}

/* ---------- VirtualBox window ---------- */

const box = "size-4 block shrink-0";
const StatusIcons = () => (
  <>
    <svg viewBox="0 0 16 16" className={box}><rect x="1" y=".5" width="13" height="15" rx="1" fill="#9fd4fb" stroke="#1668cf" strokeWidth="1.500" /><circle cx="8" cy="6.500" r="4" fill="#fff" stroke="#1668cf" strokeWidth="1.300" /><circle cx="8" cy="6.500" r="1" fill="#1668cf" /><path d="M6 9l-3.500 4h6z" fill="#1668cf" /></svg>
    <svg viewBox="0 0 16 16" className={box}><circle cx="8" cy="8" r="7.300" fill="#dcdcdc" stroke="#b4b4b4" /><circle cx="8" cy="8" r="1.600" fill="#eee" stroke="#aaa" /></svg>
    <svg viewBox="0 0 16 16" className={box}><path d="M10 3h5v10h-2v2H8" fill="#ccc" stroke="#aaa" /><path d="M1 2l4 3v6l-4 3zM5 4h4v8H5z" fill="#6fd0f8" stroke="#1668cf" /><path d="M12 5h3M12 8h3M12 11h3" stroke="#888" /></svg>
    <svg viewBox="0 0 16 16" className={box}><path d="M6 1h9v6h-2v2H8V7H6z" fill="#1a96e8" stroke="#666" /><path d="M1 6h8.500v6h-2v2.500H3V12H1z" fill="#1a96e8" stroke="#fff" strokeWidth="3" /><path d="M1 6h8.500v6h-2v2.500H3V12H1z" fill="#fff" stroke="#666" /><path d="M2.500 7.500H8v3H2.500z" fill="#1a96e8" /></svg>
    <svg viewBox="0 0 16 16" className={box}><path d="M9 3q-5 2-6.500 7L1 15l5-1.500Q11 12 13 7z" fill="#7fd3f7" stroke="#1668cf" /><path d="M9 3l2-2 4 4-2 2z" fill="#eee" stroke="#555" /></svg>
    <svg viewBox="0 0 16 16" className={box}><path d="M.5 3H8l2-2h5.500v14H.5z" fill="#d5d5d5" stroke="#b8b8b8" /></svg>
    <svg viewBox="0 0 16 16" className={box}><path d="M1 1h14v11h-3v3H4v-3H1z" fill="#fff" stroke="#666" strokeWidth="1.500" /><rect x="3" y="3" width="10" height="7" fill="#1a86e0" /><rect x="5" y="5" width="6" height="3" fill="none" stroke="#fff" /></svg>
    <svg viewBox="0 0 16 16" className={box}><path d="M1 5h12v8h-2v2H4v-2H1z" fill="#fff" stroke="#666" /><path d="M2.500 6.500h9v5h-9z" fill="#1a86e0" /><rect x="4.500" y="1" width="9" height="6" fill="#7d8fe8" stroke="#3344a8" /><path d="M13 3l3-2v6l-3-2z" fill="#3f51c0" /></svg>
    <svg viewBox="0 0 16 16" className={box}><rect x="1" y="1" width="10" height="14" fill="#7f90e0" stroke="#25359c" strokeDasharray="2 1" /><path d="M3 4l3 7 3-7" fill="none" stroke="#fff" strokeWidth="1.800" /><rect x="13" y=".7" width="2.400" height="14.600" fill="#fff" stroke="#000" /></svg>
    <svg viewBox="0 0 16 16" className={box}><circle cx="7.500" cy="8" r="7" fill="#6cc4f0" stroke="#2b83c0" /><path d="M2 3q4-1 4 2t-3 5M9 2q3 2 4 4" fill="none" stroke="#d9f4d0" strokeWidth="1.500" /><path d="M8 5l4 1 3.500 4-4.500 5-5-1 3-3z" fill="#7cdb22" stroke="#3b8a10" /></svg>
    <svg viewBox="0 0 16 16" className={box}><rect x=".8" y=".8" width="14.400" height="14.400" rx="2" fill="#7fcdfa" stroke="#1668cf" strokeWidth="1.500" /><path d="M6 4h4v4h3l-5 5-5-5h3z" fill="#0c2f6e" /></svg>
  </>
);

function Wallpaper() {
  return (
    <svg className="h-full w-full" preserveAspectRatio="none" viewBox="0 0 32 560">
      <defs><linearGradient id="wp" x1="0" y1="0" x2="0" y2="1"><stop offset="0" stopColor="#505050" /><stop offset=".5" stopColor="#353535" /><stop offset="1" stopColor="#242424" /></linearGradient>
        <linearGradient id="sh"><stop offset="0" stopColor="#000" stopOpacity=".6" /><stop offset="1" stopColor="#000" stopOpacity="0" /></linearGradient></defs>
      <rect width="32" height="560" fill="url(#wp)" />
      <path d="M0 40l32-4M0 62h32M0 95l32-4M0 125l32-8M0 235l32-10M0 285l32-8M0 335l32-8M0 385l32-16M0 555l32-18M5 10l27 40M0 110l32 50M10 510l22 30" stroke="#000" strokeOpacity=".3" />
      <rect width="12" height="560" fill="url(#sh)" />
    </svg>
  );
}

const guestTasks: Task[] = [
  { label: "Firefox", icon: <FirefoxMint /> },
  { label: "Terminal", icon: <TerminalIcon /> },
  { label: "Archivos", icon: <FolderGreen /> },
  { label: "gFTP", icon: <GftpTaskIcon />, active: true, running: true },
];

function VirtualBox() {
  return (
    <section className="flex min-w-0 flex-1 flex-col border-t border-t-[#efefef] bg-[#efefef]">
      <header className="flex h-6 shrink-0 items-center bg-[#d9d9d9] pr-[10px]">
        <span className="flex-1 pl-[72px] text-center text-[#9a9a9a]">cliSSH [Corriendo] - Oracle VM VirtualBox</span>
        <WindowControls active={false} />
      </header>
      <nav className="flex h-[22px] shrink-0 items-center gap-[17px] border-b border-[#c4c4c4] bg-[#d9d9d9] pl-[12px] text-[#404040]">
        {["Archivo", "Máquina", "Ver", "Entrada", "Dispositivos", "Ayuda"].map((m) => <button key={m}>{m}</button>)}
      </nav>
      <div className="flex min-h-0 flex-1 items-center justify-center">
        <div className="flex w-full max-w-[800px] flex-col">
          <div className="flex bg-[#111]">
            <div className="w-[13px] bg-linear-to-r from-[#1a1a1a] to-[#050505]" />
            <Gftp />
            <div className="relative w-8"><div className="absolute inset-0"><Wallpaper /></div></div>
          </div>
          <Panel tasks={guestTasks} clock="00:45" tray={<><ClipTray /><ShieldTray /><NetTray /><VolumeTray faded /></>} />
        </div>
      </div>
      <footer className="flex h-[22px] shrink-0 items-center gap-[3px] self-end pr-[25px]">
        <StatusIcons />
        <span className="w-[75px] whitespace-nowrap">Ctrl Derecho</span>
      </footer>
    </section>
  );
}

const hostTasks: Task[] = [
  { label: "Monitor del sistema", icon: <MonitorIcon /> },
  { label: "Firefox", icon: <FirefoxMint />, active: true, running: true },
  { label: "Terminal", icon: <TerminalIcon />, running: true },
  { label: "Archivos", icon: <FolderGreen />, running: true },
  { label: "Visual Studio Code", icon: <CodeIcon /> },
  { label: "Máquina virtual 1", icon: <Vm64Icon />, running: true },
  { label: "Máquina virtual 2", icon: <Vm64Icon />, running: true },
  { label: "Writer", icon: <WriterIcon />, running: true },
];

export default function App() {
  return (
    <main className="flex h-screen flex-col overflow-hidden font-['Noto_Sans',sans-serif] text-[13px] leading-5 text-[#303030]">
      <div className="flex min-h-0 flex-1">
        <Firefox />
        <div className="w-[2px] shrink-0 bg-[#cdcdcd]" />
        <VirtualBox />
      </div>
      <Panel tasks={hostTasks} clock="20:34" tray={<><EyeTray /><ClipTray /><ShieldTray /><EjectTray /><NetTray /><VolumeTray /></>} />
    </main>
  );
}
